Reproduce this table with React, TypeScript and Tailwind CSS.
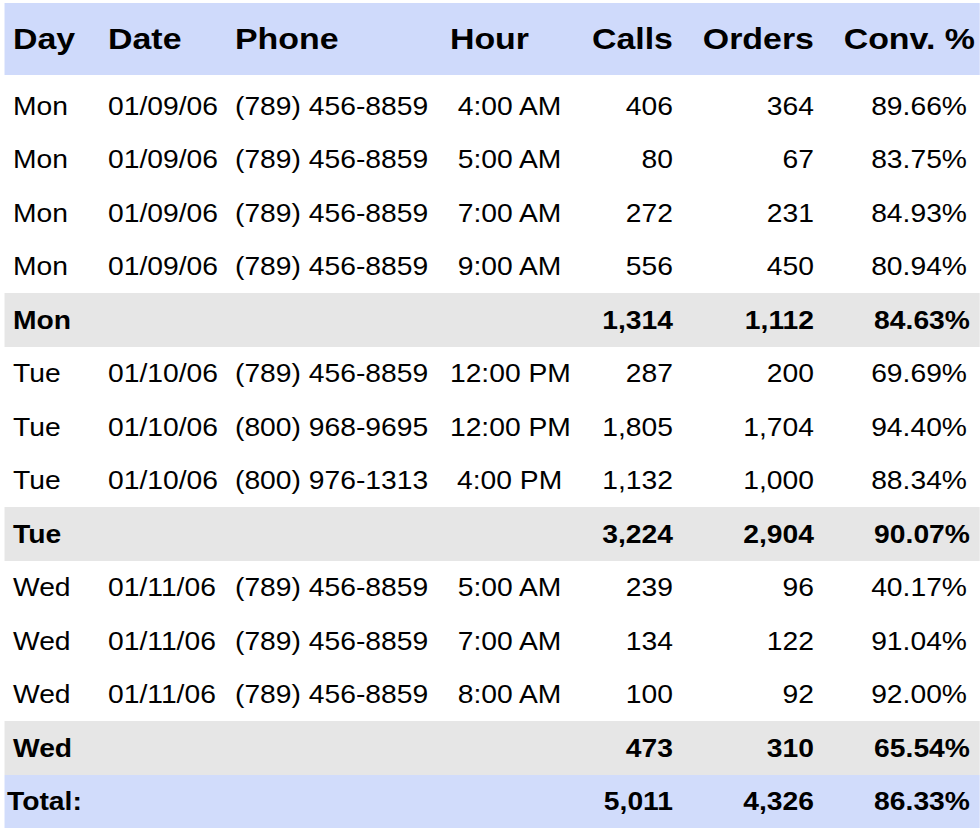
import React from "react";

type Row =
  | { kind: "d"; day: string; date: string; phone: string; hour: string; calls: string; orders: string; conv: string }
  | { kind: "sub" | "total"; day: string; calls: string; orders: string; conv: string };

const P1 = "(789) 456-8859";

const rows: Row[] = [
  { kind: "d", day: "Mon", date: "01/09/06", phone: P1, hour: "4:00 AM", calls: "406", orders: "364", conv: "89.66%" },
  { kind: "d", day: "Mon", date: "01/09/06", phone: P1, hour: "5:00 AM", calls: "80", orders: "67", conv: "83.75%" },
  { kind: "d", day: "Mon", date: "01/09/06", phone: P1, hour: "7:00 AM", calls: "272", orders: "231", conv: "84.93%" },
  { kind: "d", day: "Mon", date: "01/09/06", phone: P1, hour: "9:00 AM", calls: "556", orders: "450", conv: "80.94%" },
  { kind: "sub", day: "Mon", calls: "1,314", orders: "1,112", conv: "84.63%" },
  { kind: "d", day: "Tue", date: "01/10/06", phone: P1, hour: "12:00 PM", calls: "287", orders: "200", conv: "69.69%" },
  { kind: "d", day: "Tue", date: "01/10/06", phone: "(800) 968-9695", hour: "12:00 PM", calls: "1,805", orders: "1,704", conv: "94.40%" },
  { kind: "d", day: "Tue", date: "01/10/06", phone: "(800) 976-1313", hour: "4:00 PM", calls: "1,132", orders: "1,000", conv: "88.34%" },
  { kind: "sub", day: "Tue", calls: "3,224", orders: "2,904", conv: "90.07%" },
  { kind: "d", day: "Wed", date: "01/11/06", phone: P1, hour: "5:00 AM", calls: "239", orders: "96", conv: "40.17%" },
  { kind: "d", day: "Wed", date: "01/11/06", phone: P1, hour: "7:00 AM", calls: "134", orders: "122", conv: "91.04%" },
  { kind: "d", day: "Wed", date: "01/11/06", phone: P1, hour: "8:00 AM", calls: "100", orders: "92", conv: "92.00%" },
  { kind: "sub", day: "Wed", calls: "473", orders: "310", conv: "65.54%" },
  { kind: "total", day: "Total:", calls: "5,011", orders: "4,326", conv: "86.33%" },
];

const grid =
  "grid grid-cols-[91.2px_112.4px_190.2px_105.6px_91.8px_124.8px_142.4px_1fr] items-center whitespace-nowrap";

export default function App() {
  return (
    <div className="w-[980px] h-[833px] overflow-hidden bg-white">
      <div
        className="w-[867.3px] origin-left scale-x-[1.13] font-['Liberation_Sans',Arial,sans-serif] text-black"
      >
        <div className="pl-[4.4px] pt-[3px]">
          {/* header */}
          <div className={`${grid} h-[72px] bg-[#cfdafb] text-[30px] font-bold leading-none`}>
            <div className="pl-[7.1px]">Day</div>
            <div>Date</div>
            <div>Phone</div>
            <div>Hour</div>
            <div className="text-right">Calls</div>
            <div className="text-right">Orders</div>
            <div className="text-right">Conv. %</div>
            <div />
          </div>
          <div className="h-[4.25px]" />
          {rows.map((r, i) => {
            if (r.kind === "d") {
              return (
                <div key={i} className={`${grid} h-[53.5px] text-[25px] leading-none`}>
                  <div className="pl-[7.1px]">{r.day}</div>
                  <div>{r.date}</div>
                  <div>{r.phone}</div>
                  <div className="text-center">{r.hour}</div>
                  <div className="text-right">{r.calls}</div>
                  <div className="text-right">{r.orders}</div>
                  <div className="text-right pr-[7px]">{r.conv}</div>
                  <div />
                </div>
              );
            }
            const isTotal = r.kind === "total";
            return (
              <div
                key={i}
                className={`${grid} h-[53.5px] text-[25px] font-bold leading-none ${
                  isTotal ? "bg-[#d1dcfb]" : "bg-[#e6e6e6]"
                }`}
              >
                <div className={isTotal ? "pl-[1.8px]" : "pl-[7.1px]"}>{r.day}</div>
                <div />
                <div />
                <div />
                <div className="text-right">{r.calls}</div>
                <div className="text-right">{r.orders}</div>
                <div className="text-right pr-[4.4px]">{r.conv}</div>
                <div />
              </div>
            );
          })}
        </div>
      </div>
    </div>
  );
}
